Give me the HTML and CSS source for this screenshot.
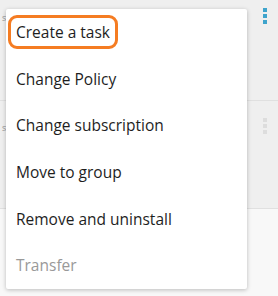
FILE: index.html
```html
<!DOCTYPE html>
<html lang="en">
<head>
  <meta charset="UTF-8">
  <title>Actions menu</title>
  <link rel="stylesheet" href="styles.css">
</head>
<body>
  <div class="list">
    <div class="row">
      <span class="peek">s</span>
      <span class="dots active"><i></i><i></i><i></i></span>
    </div>
    <div class="row second">
      <span class="peek">s</span>
      <span class="dots"><i></i><i></i><i></i></span>
    </div>
    <div class="rest"></div>
  </div>

  <ul class="menu">
    <li><span class="hl">Create a task</span></li>
    <li>Change Policy</li>
    <li>Change subscription</li>
    <li>Move to group</li>
    <li>Remove and uninstall</li>
    <li class="disabled">Transfer</li>
  </ul>
</body>
</html>
```

FILE: styles.css
```css
body {
  margin: 0;
  font-family: "Open Sans", "Liberation Sans", sans-serif;
  background: #f8f8f8;
  height: 296px;
  overflow: hidden;
  position: relative;
}
.row {
  height: 101px;
  background: #efefef;
  border-bottom: 1px solid #e0e0e0;
  box-sizing: border-box;
  display: flex;
  justify-content: space-between;
  align-items: flex-start;
  padding: 8px 11px 0 2px;
}
.row.second {
  height: 108px;
  padding-top: 17px;
}
.peek {
  font-size: 9px;
  color: #999;
  line-height: 12px;
  margin-top: 4px;
}
.dots {
  display: flex;
  flex-direction: column;
  gap: 2px;
}
.dots i {
  width: 4px;
  height: 4px;
  background: #ddd;
}
.dots.active i { background: #3ea4cc; }

.menu {
  position: absolute;
  left: 6px;
  top: 9px;
  width: 241px;
  margin: 0;
  padding: 0;
  list-style: none;
  background: #fff;
  border-radius: 2px;
  box-shadow: 0 1px 4px rgba(0,0,0,0.25);
}
.menu li {
  height: 46.6px;
  display: flex;
  align-items: center;
  padding-left: 10px;
  font-size: 15.5px;
  color: #1e1e1e;
}
.menu li.disabled { color: #999; }
.hl {
  margin-left: -8px;
  padding: 3px 5px;
  border: 3px solid #f57c22;
  border-radius: 9px;
}
```
